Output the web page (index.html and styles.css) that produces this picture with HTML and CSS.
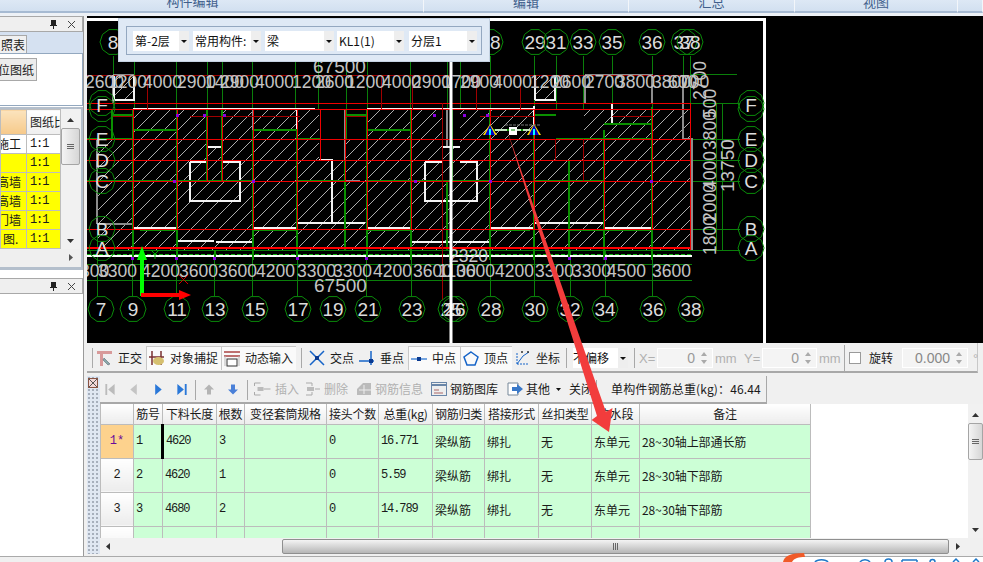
FILE: index.html
```html
<!DOCTYPE html>
<html lang="zh">
<head>
<meta charset="utf-8">
<title>钢筋编辑</title>
<link rel="stylesheet" href="styles.css">
</head>
<body>
<div class="app">
  <header class="ribbon">
    <div class="rtab rtab-a">构件编辑</div>
    <div class="rtab rtab-b">编辑</div>
    <div class="rtab rtab-c">汇总</div>
    <div class="rtab rtab-d">视图</div>
    <div class="rtab rtab-e"></div>
  </header>
  <div class="main">
    <aside class="side">
      <div class="pane-head">
        <svg class="pin" viewBox="0 0 9 11"><path d="M2 1h5v5h1v1H5v3H4V7H1V6h1z" fill="#222"/></svg>
        <svg class="close" viewBox="0 0 9 9"><path d="M1 1l7 7M8 1L1 8" stroke="#444" fill="none"/></svg>
      </div>
      <div class="tabstrip"><span class="tab">照表</span></div>
      <div class="box-top"><span class="btn-doc">位图纸</span></div>
      <div class="box-grid">
        <div class="gridwrap">
          <table class="sheet">
            <tr><th class="sh-o"></th><th class="sh-h">图纸比</th></tr>
            <tr><td class="c1 w">施工</td><td class="c2 w">1:1</td></tr>
            <tr><td class="c1 y"></td><td class="c2 y">1:1</td></tr>
            <tr><td class="c1 y">高墙</td><td class="c2 y">1:1</td></tr>
            <tr><td class="c1 y">高墙</td><td class="c2 y">1:1</td></tr>
            <tr><td class="c1 y">门墙</td><td class="c2 y">1:1</td></tr>
            <tr><td class="c1 c1b y">图.</td><td class="c2 y">1:1</td></tr>
          </table>
          <div class="vbar">
            <svg class="arw" viewBox="0 0 7 4"><path d="M0 4L3.500 0 7 4z" fill="#333"/></svg>
            <div class="vthumb"><i></i><i></i><i></i></div>
            <svg class="arw arw-end" viewBox="0 0 7 4"><path d="M0 0L3.500 4 7 0z" fill="#333"/></svg>
          </div>
        </div>
        <div class="side-hbar"><svg class="arw-r" viewBox="0 0 4 7"><path d="M0 0L4 3.500 0 7z" fill="#555"/></svg></div>
      </div>
      <div class="pane-head pane-head-2">
        <svg class="pin" viewBox="0 0 9 11"><path d="M2 1h5v5h1v1H5v3H4V7H1V6h1z" fill="#222"/></svg>
        <svg class="close" viewBox="0 0 9 9"><path d="M1 1l7 7M8 1L1 8" stroke="#444" fill="none"/></svg>
      </div>
      <div class="side-empty"></div>
    </aside>

    <section class="work">
      <div class="canvas">
        <svg class="cad" viewBox="87 16 896 327" preserveAspectRatio="none">
          <defs>
            <pattern id="hatch" patternUnits="userSpaceOnUse" width="14" height="14">
              <path d="M-2 16L16 -2M-2 2L2 -2M12 16L16 12" stroke="#d8d8d8" stroke-width=".8"/>
            </pattern>
            <polygon id="nd" points="13,0 10.500,7.600 4,12.400 -4,12.400 -10.500,7.600 -13,0 -10.500,-7.600 -4,-12.400 4,-12.400 10.500,-7.600" fill="none" stroke="#0a8a0a"/>
          </defs>
          <rect x="87" y="16" width="896" height="327" fill="#000"/>
          <path d="M87 19.500H764.500V343" fill="none" stroke="#fff" stroke-width="3"/>
          <!-- hatched floor -->
          <rect x="133" y="109" width="558" height="142" fill="url(#hatch)"/>
          <rect x="97" y="139" width="36" height="112" fill="url(#hatch)"/>
          <rect x="114" y="75" width="19" height="25" fill="url(#hatch)"/>
          <rect x="535" y="75" width="20" height="25" fill="url(#hatch)"/>
          <rect x="208" y="109" width="14" height="38" fill="#000"/>
          <rect x="319" y="109" width="26" height="52" fill="#000"/>
          <rect x="346" y="109" width="21" height="30" fill="#000"/>
          <rect x="112" y="109" width="21" height="30" fill="#000"/>
          <rect x="442" y="109" width="18" height="38" fill="#000"/>
          <rect x="535" y="109" width="21" height="30" fill="#000"/>
          <rect x="556" y="103" width="28" height="36" fill="#000"/>
          <!-- thin green axis lines -->
          <path class="gl" d="M113 56V100M134 62V109M176 62V109M207 62V109M222 62V109M252 62V109M295 62V109M318 62V109M346 62V109M367 62V109M410 62V109M447 62V109M460 62V109M490 56V109M534 56V109M556 56V109M583 56V109M612 56V109M652 56V109M683 56V109M690 56V109"/>
          <path class="gl" d="M97 223V296M132 250V296M176 250V296M214 250V296M252 250V296M297 250V296M366 250V296M411 250V296M490 250V296M534 250V296M570 250V296M605 250V296M652 250V296"/>
          <path class="gl" d="M87 264H692M87 280H692M87 139H740M87 160H740M87 181H740M87 229H740M87 250H740M610 103H740M690 74H737M716 103V250M722 103V250"/>
          <!-- gray walls -->
          <path class="gw" d="M113 75H134M113 75V103M585 75H652V103M585 75V103M683 75V139H692V250M133 109V205M253 109V162M345 110V160M447 110V147M120 181H133M297 181H313M345 181H360M570 181H604M97 224H132M97 139V224"/>
          <!-- white walls -->
          <path class="wt" d="M114 75V100H134V75M133 109H315M367 109H534M535 100H555V75M535 75V100"/>
          <path class="wt" d="M190 162H206M223 162H240V201H190V162M425 162H442M460 162H477V201H425V162M208 147H222M442 147H460"/>
          <path class="wt" d="M134 228H177V241H214M216 242H253V228H297M297 110V223H365M319 160H332V223M313 181H332M367 228H411V242H450M453 242H490V228H534M535 223H604V139H612M612 103V124H652M605 228H652V110M534 106V139M490 162V242"/>
          <path class="wh" d="M87 256H692"/>
          <!-- heavy green walls -->
          <path class="gh" d="M133 109V250M177 109V250M207 109V181M222 109V181M253 130V250M297 130V250M345 160V250M367 109V250M411 109V250M452 109V181M447 181V250M490 109V250M534 130V250M569 160V250M604 130V250M652 107V250M112 109V139M346 109V139"/>
          <path class="gh" d="M87 139H133M133 130H176M253 130H297M297 139H320M367 130H411M490 130H534M556 139H652M604 124H652M133 181H253M87 181H133M297 181H345M367 181H490M534 181H604M140 230H177M253 230H297M367 230H411M490 230H530M569 230H652M112 115H133M346 115H366M535 115H556"/>
          <path class="gd" d="M87 254H692"/>
          <path class="gh" d="M133 250V260M177 250V260M215 250V260M253 250V260M297 250V260M367 250V260M411 250V260M450 250V260M490 250V260M534 250V260M569 250V260M604 250V260M652 250V260"/>
          <!-- red grid -->
          <path class="rl" d="M87 103H690M87 109H690M87 139H690M87 160H690M87 181H690M87 229H690M133 109V229M177 109V229M207 116V181M222 116V181M253 109V229M297 109V229M320 109V160M345 109V181M367 109V229M411 109V229M490 109V229M534 109V229M604 139V229M652 109V229M690 103V250"/>
          <path class="rb" d="M87 248H690"/>
          <path class="dr" d="M87 75H690M147 75V109M381 75V109M412 75V109M476 75V109M520 75V109M442 103V300M112 116H133M346 116H366M190 116H300M480 116H534M612 116H652M555 139V160M583 139V181"/>
          <!-- marks -->
          <path class="mk" d="M176 115h3M203 115h3M223 115h3M252 181h3M433 115h3M463 115h3M486 115h3M173 181h3M414 181h3M489 181h3M650 181h3M131 258h3M175 258h3M213 258h3M296 258h3M365 258h3M450 258h3M568 258h3M604 258h3"/>
          <!-- dimensions -->
          <g class="dim">
            <text x="85" y="88">2600</text><text x="108" y="88">1200</text><text x="143" y="88">4000</text><text x="177" y="88">2900</text><text x="205" y="88">1400</text><text x="220" y="88">2900</text><text x="255" y="88">4000</text><text x="292" y="88">1200</text><text x="315" y="88">2600</text><text x="346" y="88">1200</text><text x="382" y="88">4000</text><text x="412" y="88">2900</text><text x="442" y="88">1700</text><text x="460" y="88">2900</text><text x="493" y="88">4000</text><text x="530" y="88">1200</text><text x="552" y="88">2600</text><text x="585" y="88">2700</text><text x="616" y="88">3800</text><text x="652" y="88">3800</text><text x="668" y="88">600</text><text x="680" y="88">700</text>
            <text x="80" y="277">300</text><text x="98" y="277">3300</text><text x="141" y="277">4200</text><text x="179" y="277">3600</text><text x="218" y="277">3600</text><text x="256" y="277">4200</text><text x="297" y="277">3300</text><text x="333" y="277">3300</text><text x="373" y="277">4200</text><text x="413" y="277">3600</text><text x="438" y="277">1100</text><text x="456" y="277">3600</text><text x="495" y="277">4200</text><text x="535" y="277">3300</text><text x="572" y="277">3300</text><text x="607" y="277">4500</text><text x="652" y="277">3600</text>
            <text class="big" x="313" y="73">67500</text><text class="big" x="314" y="292">67500</text><text x="449" y="262">2320</text>
            <text transform="translate(706 100) rotate(-90)">2700</text>
            <text transform="translate(716 118) rotate(-90)">500</text>
            <text transform="translate(716 150) rotate(-90)">3800</text>
            <text transform="translate(716 190) rotate(-90)">4000</text>
            <text transform="translate(716 222) rotate(-90)">2000</text>
            <text transform="translate(716 255) rotate(-90)">1800</text>
            <text class="big" transform="translate(734 192) rotate(-90)">13750</text>
          </g>
          <!-- axis nodes -->
          <g class="nodes">
            <use href="#nd" x="113" y="42"/><text x="113" y="49">8</text>
            <use href="#nd" x="490" y="42"/><text x="490" y="49">28</text>
            <use href="#nd" x="535" y="42"/><text x="535" y="49">29</text>
            <use href="#nd" x="556" y="42"/><text x="556" y="49">31</text>
            <use href="#nd" x="583" y="42"/><text x="583" y="49">33</text>
            <use href="#nd" x="612" y="42"/><text x="612" y="49">35</text>
            <use href="#nd" x="652" y="42"/><text x="652" y="49">36</text>
            <use href="#nd" x="684" y="42"/><text x="684" y="49">37</text>
            <use href="#nd" x="690" y="42"/><text x="690" y="49">38</text>
            <use href="#nd" x="101" y="309"/><text x="101" y="316">7</text>
            <use href="#nd" x="133" y="309"/><text x="133" y="316">9</text>
            <use href="#nd" x="177" y="309"/><text x="177" y="316">11</text>
            <use href="#nd" x="215" y="309"/><text x="215" y="316">13</text>
            <use href="#nd" x="255" y="309"/><text x="255" y="316">15</text>
            <use href="#nd" x="298" y="309"/><text x="298" y="316">17</text>
            <use href="#nd" x="333" y="309"/><text x="333" y="316">19</text>
            <use href="#nd" x="368" y="309"/><text x="368" y="316">21</text>
            <use href="#nd" x="412" y="309"/><text x="412" y="316">23</text>
            <use href="#nd" x="451" y="309"/><text x="451" y="316">25</text>
            <use href="#nd" x="455" y="309"/><text x="455" y="316">26</text>
            <use href="#nd" x="491" y="309"/><text x="491" y="316">28</text>
            <use href="#nd" x="535" y="309"/><text x="535" y="316">30</text>
            <use href="#nd" x="570" y="309"/><text x="570" y="316">32</text>
            <use href="#nd" x="605" y="309"/><text x="605" y="316">34</text>
            <use href="#nd" x="653" y="309"/><text x="653" y="316">36</text>
            <use href="#nd" x="691" y="309"/><text x="691" y="316">38</text>
            <use href="#nd" x="102" y="103"/><use href="#nd" x="102" y="109"/><text x="102" y="112">F</text>
            <use href="#nd" x="102" y="139"/><text x="102" y="146">E</text>
            <use href="#nd" x="102" y="160"/><text x="102" y="167">D</text>
            <use href="#nd" x="102" y="181"/><text x="102" y="188">C</text>
            <use href="#nd" x="102" y="229"/><text x="102" y="236">B</text>
            <use href="#nd" x="102" y="248"/><text x="102" y="255">A</text>
            <use href="#nd" x="751" y="103"/><use href="#nd" x="751" y="109"/><text x="751" y="112">F</text>
            <use href="#nd" x="751" y="139"/><text x="751" y="146">E</text>
            <use href="#nd" x="751" y="160"/><text x="751" y="167">D</text>
            <use href="#nd" x="751" y="181"/><text x="751" y="188">C</text>
            <use href="#nd" x="751" y="229"/><text x="751" y="236">B</text>
            <use href="#nd" x="751" y="248"/><text x="751" y="255">A</text>
          </g>
          <path d="M451 60V343" stroke="#fff" stroke-width="3"/>
          <!-- UCS arrows -->
          <path d="M142 296V258" stroke="#0f0" stroke-width="4"/>
          <path d="M142 246L147 260H137z" fill="#0f0"/>
          <path d="M141 295H180" stroke="#f00" stroke-width="4"/>
          <path d="M191 295L179 290V300z" fill="#f00"/>
          <path d="M151 250L155 254 159 250M155 254V259" stroke="#0a0" fill="none"/>
          <path d="M179 275L188 284M188 275L179 284" stroke="#c00" fill="none"/>
          <!-- selected beam -->
          <path d="M495 130H530" stroke="#fff" stroke-width="1.500" stroke-dasharray="12 2"/>
          <path d="M490 124L497 135H483z" fill="#ffdd00"/><path d="M490 125L495 135H485z" fill="#00c"/><path d="M489 129h2v6h-2z" fill="#0ff"/>
          <path d="M534 124L541 135H527z" fill="#ffdd00"/><path d="M534 125L539 135H529z" fill="#00c"/><path d="M533 129h2v6h-2z" fill="#0ff"/>
          <rect x="509" y="127" width="8" height="8" fill="#fff"/><path d="M511 130h4" stroke="#080"/>
          <path d="M505 125H540" stroke="#777" stroke-dasharray="3 1"/>
        </svg>
        <div class="floatbar">
          <div class="floatbox">
            <div class="pick pick-a"><span>第-2层</span><b></b></div>
            <div class="pick pick-b"><span>常用构件:</span><b></b></div>
            <div class="pick pick-c"><span>梁</span><b></b></div>
            <div class="pick pick-d"><span>KL1(1)</span><b></b></div>
            <div class="pick pick-e"><span>分层1</span><b></b></div>
          </div>
        </div>
      </div>

      <div class="snapbar">
        <i class="grip"></i>
        <div class="tool"><svg class="ic15" viewBox="0 0 16 16"><path d="M0 1h15v3H6v12H3V4H0z" fill="#d89a9a"/><path d="M7 8l6 6-2 1-5-5z" fill="#8aa" stroke="#556" stroke-width=".5"/></svg><span>正交</span></div>
        <div class="tool on"><svg class="ic15" viewBox="0 0 16 16"><path d="M3 0v14M12 0v14M0 6h15" stroke="#7a3030" stroke-width="1.500"/><ellipse cx="9.500" cy="10" rx="5.500" ry="4" fill="#d6c070"/></svg><span>对象捕捉</span></div>
        <div class="tool on"><svg class="ic15" viewBox="0 0 16 16"><path d="M0 1h16M0 5h16" stroke="#a44" stroke-width="1.500"/><path d="M1 5v10M15 5v10" stroke="#bbb"/><rect x="3" y="8" width="10" height="7" fill="#fff" stroke="#333"/></svg><span>动态输入</span></div>
        <i class="sep"></i>
        <div class="tool"><svg class="ic15" viewBox="0 0 16 16"><path d="M1 1l14 14M15 1L1 15" stroke="#1664c8" stroke-width="1.500"/><rect x="6" y="6" width="4" height="4" fill="#0a3a90"/></svg><span>交点</span></div>
        <div class="tool"><svg class="ic15" viewBox="0 0 16 16"><path d="M0 11h15" stroke="#1664c8" stroke-width="1.500"/><path d="M12 1v14" stroke="#1664c8" stroke-width="1.500"/><rect x="10" y="9" width="4" height="4" fill="#0a3a90"/></svg><span>垂点</span></div>
        <div class="tool on"><svg class="ic15" viewBox="0 0 16 16"><path d="M0 8h16" stroke="#4b8ad8" stroke-width="1.500"/><rect x="6" y="6" width="4" height="4" fill="#0a3a90"/></svg><span>中点</span></div>
        <div class="tool on"><svg class="ic15" viewBox="0 0 16 16"><path d="M8 1l7 5-3 8H4L1 6z" fill="none" stroke="#1664c8" stroke-width="1.500"/></svg><span>顶点</span></div>
        <div class="tool"><svg class="ic15" viewBox="0 0 16 16"><path d="M2 14V2M2 14h12" stroke="#1664c8" stroke-dasharray="2 1"/><path d="M2 14l6-8 6-4" stroke="#1664c8" fill="none"/><circle cx="13" cy="2" r="1" fill="#333"/><circle cx="7" cy="2" r="1" fill="#333"/></svg><span>坐标</span></div>
        <i class="sep"></i>
        <div class="pick pick-off"><span>不偏移</span><b></b></div>
        <i class="sep"></i>
        <span class="dis lbl-x">X=</span>
        <div class="spin"><span>0</span><u></u></div>
        <span class="dis">mm</span>
        <span class="dis">Y=</span>
        <div class="spin"><span>0</span><u></u></div>
        <span class="dis">mm</span>
        <i class="sep sep-thin"></i>
        <i class="chk"></i>
        <span class="rot">旋转</span>
        <div class="spin spin-r"><span>0.000</span><u></u></div>
        <span class="dis deg">°</span>
      </div>

      <div class="lower">
        <div class="strip">
          <svg class="strip-x" viewBox="0 0 10 10"><rect x=".5" y=".5" width="9" height="9" fill="#f2d8d8" stroke="#854"/><path d="M1 1l8 8M9 1L1 9" stroke="#555"/></svg>
        </div>
        <div class="rebar">
          <div class="rebarbar">
            <svg class="nav" viewBox="0 0 12 14"><path d="M1 1h2v12H1zM11 1v12L4 7z" fill="#bbb"/></svg>
            <svg class="nav" viewBox="0 0 12 14"><path d="M9 1v12L2 7z" fill="#c4c4c4"/></svg>
            <svg class="nav" viewBox="0 0 12 14"><path d="M3 1v12l7-6z" fill="#2a78d8"/></svg>
            <svg class="nav" viewBox="0 0 12 14"><path d="M1 1v12l7-6zM9 1h2v12H9z" fill="#2a78d8"/></svg>
            <i class="sep"></i>
            <svg class="nav" viewBox="0 0 12 12"><path d="M6 1l5 5H8v5H4V6H1z" fill="#b4b4b4"/></svg>
            <svg class="nav" viewBox="0 0 12 12"><path d="M6 11l5-5H8V1H4v5H1z" fill="#4a80d8"/></svg>
            <i class="sep"></i>
            <div class="tool dim-t"><svg class="ic15 wide" viewBox="0 0 18 14"><path d="M1 1h6M1 13h6M1 1v3M1 10v3M10 7h7" stroke="#aaa" fill="none"/><rect x="4" y="5" width="6" height="4" fill="#bbb"/></svg><span>插入</span></div>
            <div class="tool dim-t"><svg class="ic15" viewBox="0 0 16 14"><path d="M1 1h6v3M1 13h6v-3M10 7h5" stroke="#aaa" fill="none"/><rect x="2" y="5" width="7" height="4" fill="#bbb"/></svg><span>删除</span></div>
            <div class="tool dim-t"><svg class="ic15" viewBox="0 0 16 14"><path d="M1 7l6-6h8v12H1z" fill="#bbb"/><path d="M8 3v9M3 8h12" stroke="#eee"/></svg><span>钢筋信息</span></div>
            <div class="tool"><svg class="ic15" viewBox="0 0 16 14"><rect x=".5" y=".5" width="15" height="13" fill="#eee" stroke="#6a86a8"/><path d="M1 3h14" stroke="#6a86a8" stroke-width="2"/><path d="M3 8h5M3 11h9" stroke="#a66"/></svg><span>钢筋图库</span></div>
            <div class="tool"><svg class="ic15" viewBox="0 0 16 14"><path d="M1 1h10v12H1z" fill="#fff" stroke="#789"/><path d="M5 5h5V2l6 5-6 5V9H5z" fill="#3a78c8"/></svg><span>其他</span><svg class="caret" viewBox="0 0 5 3"><path d="M0 0h5L2.500 3z" fill="#111"/></svg></div>
            <div class="tool"><span>关闭</span></div>
            <i class="sep"></i>
            <span class="total">单构件钢筋总重(kg)：46.44</span>
          </div>
          <div class="tablewrap">
            <table class="rows">
              <colgroup><col class="k0"><col class="k1"><col class="k2"><col class="k3"><col class="k4"><col class="k5"><col class="k6"><col class="k7"><col class="k8"><col class="k9"><col class="k10"><col class="k11"></colgroup>
              <thead>
                <tr><th></th><th>筋号</th><th>下料长度</th><th>根数</th><th>变径套筒规格</th><th>接头个数</th><th>总重(kg)</th><th>钢筋归类</th><th>搭接形式</th><th>丝扣类型</th><th>流水段</th><th>备注</th></tr>
              </thead>
              <tbody>
                <tr class="cur"><th>1*</th><td>1</td><td class="bar">4620</td><td>3</td><td></td><td>0</td><td>16.771</td><td class="zh">梁纵筋</td><td class="zh">绑扎</td><td class="zh">无</td><td class="zh">东单元</td><td class="zh note">28~30轴上部通长筋</td></tr>
                <tr><th>2</th><td>2</td><td class="bar">4620</td><td>1</td><td></td><td>0</td><td>5.59</td><td class="zh">梁纵筋</td><td class="zh">绑扎</td><td class="zh">无</td><td class="zh">东单元</td><td class="zh note">28~30轴下部筋</td></tr>
                <tr><th>3</th><td>3</td><td class="bar">4680</td><td>2</td><td></td><td>0</td><td>14.789</td><td class="zh">梁纵筋</td><td class="zh">绑扎</td><td class="zh">无</td><td class="zh">东单元</td><td class="zh note">28~30轴下部筋</td></tr>
                <tr><th></th><td></td><td class="bar"></td><td></td><td></td><td></td><td></td><td class="zh">梁纵筋</td><td class="zh">绑扎</td><td class="zh">无</td><td class="zh">东单元</td><td class="zh note">28~30轴下部筋</td></tr>
              </tbody>
            </table>
            <div class="tbl-vbar">
              <svg class="arw" viewBox="0 0 7 4"><path d="M0 4L3.500 0 7 4z" fill="#333"/></svg>
              <div class="vthumb"><i></i><i></i><i></i></div>
              <svg class="arw arw-end" viewBox="0 0 7 4"><path d="M0 0L3.500 4 7 0z" fill="#333"/></svg>
            </div>
          </div>
          <div class="hbar">
            <svg class="arw-r" viewBox="0 0 4 7"><path d="M4 0L0 3.500 4 7z" fill="#333"/></svg>
            <div class="hthumb"><i></i><i></i><i></i></div>
            <svg class="arw-r" viewBox="0 0 4 7"><path d="M0 0L4 3.500 0 7z" fill="#333"/></svg>
          </div>
        </div>
      </div>
    </section>
  </div>
  <footer class="status"></footer>

  <svg class="overlay" viewBox="0 0 983 562">
    <polygon points="507,130 606,412 612.500,408 609,432 591.600,420 597,416" fill="#f23c3c"/>
    <path d="M783 562c1-6 8-9 21-9l1 4c-6 0-11 1-13 5z" fill="#f05a28"/>
    <path d="M815 562c2-3 11-3 13 0M860 562c2-3 8-3 10 0M885 562a3.500 3 0 0 1 7 0M902 560H917M902 560v2M917 560v2M930 562a2.500 2.500 0 0 1 5 0M953 562l3-3 3 3M973 562l3-3 3 3" fill="none" stroke="#1f78c8" stroke-width="1.500"/>
  </svg>
</div>
</body>
</html>
```
FILE: styles.css
```css
* { box-sizing: border-box; }
html, body { margin: 0; padding: 0; }
body { background: #f0f0f0; font: 12px/1.2 "Noto Sans CJK SC", "Liberation Sans", sans-serif; color: #1a1a1a; overflow: hidden; }
.app { position: relative; width: 983px; height: 562px; overflow: hidden; }
svg { display: block; }

/* ribbon */
.ribbon { display: grid; grid-template-columns: 424px 205px 166px 163px 25px; height: 16px; background: #edf1f6; }
.rtab { height: 13px; overflow: hidden; background: linear-gradient(#dde8f5, #d2e0f0); border-bottom: 2px solid #a6bad2; border-right: 1px solid #f3f6fa; text-align: center; color: #3f5f8c; font-size: 13px; line-height: 13px; }
.rtab-a { padding-right: 38px; line-height: 2px; }
.rtab-b, .rtab-c, .rtab-d { line-height: 4px; }

.main { display: flex; height: 540px; }

/* left pane */
.side { width: 84px; margin-right: 3px; flex: none; background: #fff; display: flex; flex-direction: column; border-right: 1px solid #9a9a9a; }
.pane-head { height: 16px; flex: none; display: flex; align-items: center; justify-content: flex-end; gap: 9px; padding-right: 6px; background: #efefef; border: 1px solid #a8a8a8; border-left: 0; }
.pin { width: 9px; height: 11px; }
.close { width: 9px; height: 9px; }
.tabstrip { height: 21px; flex: none; background: #d5e1f1; padding-top: 3px; display: flex; }
.tab { margin-left: -4px; width: 31px; padding: 0 0 0 4px; height: 18px; background: #f0f0f0; border: 1px solid #a8a8a8; border-bottom: 0; line-height: 17px; overflow: hidden; white-space: nowrap; font-size: 12px; }
.box-top { height: 53px; flex: none; background: #fff; border: 1px solid #93a8bf; border-left: 0; padding-top: 4px; }
.btn-doc { display: block; width: 37px; height: 23px; background: #ececec; border: 1px solid #a8a8a8; border-left: 0; text-indent: -2px; line-height: 21px; white-space: nowrap; overflow: hidden; }
.box-grid { flex: none; height: 163px; margin-top: 1px; background: #efefef; border: 2px solid #b4bfcc; border-left: 0; border-bottom-width: 3px; padding-right: 1px; display: flex; flex-direction: column; }
.gridwrap { display: flex; height: 140px; background: #fff; }
.sheet { border-collapse: collapse; table-layout: fixed; width: 61px; height: 140px; flex: none; }
.sheet th, .sheet td { border: 1px solid #bdbdbd; padding: 0; overflow: hidden; white-space: nowrap; font-weight: 400; }
.sh-o { width: 26px; height: 25px; background: linear-gradient(#fbe3bd, #f6c98a); }
.sh-h { background: linear-gradient(#fff, #eee); text-align: left; padding-left: 3px !important; }
.c1 { text-align: left; text-indent: -4px; }
.c1b { text-indent: 2px; }
.c2 { padding-left: 3px !important; font: 12px "Liberation Mono", monospace; letter-spacing: -1.100px; }
.w { background: #fff; }
.y { background: #ffff00; }
.vbar { flex: 1; display: flex; flex-direction: column; align-items: center; background: #f1f1f1; padding-top: 9px; }
.arw { width: 7px; height: 4px; flex: none; }
.arw-end { margin-top: auto; margin-bottom: 6px; }
.vthumb { align-self: stretch; margin-top: 6px; height: 37px; background: linear-gradient(90deg, #f4f4f4, #d6d6d6); border: 1px solid #a5a5a5; border-radius: 2px; display: flex; flex-direction: column; justify-content: center; gap: 1px; align-items: center; }
.vthumb i { width: 7px; height: 1px; background: #666; }
.side-hbar { height: 16px; display: flex; align-items: center; justify-content: flex-end; padding-right: 7px; }
.arw-r { width: 4px; height: 7px; flex: none; }
.pane-head-2 { margin-top: 8px; }
.side-empty { flex: 1; background: #fff; }

/* work area */
.work { flex: 1; min-width: 0; display: flex; flex-direction: column; }
.canvas { position: relative; height: 327px; background: #000; flex: none; }
.cad { width: 896px; height: 327px; }
.gl, .gh, .gd, .gw, .wt, .wh, .rl, .rb, .dr, .mk { fill: none; shape-rendering: crispEdges; }
.gl { stroke: #0a7f0a; stroke-width: 1; }
.gh { stroke: #0a9000; stroke-width: 2; }
.gd { stroke: #10b010; stroke-width: 1; stroke-dasharray: 4 2; }
.gw { stroke: #8c8c8c; stroke-width: 2; }
.wt { stroke: #f4f4f4; stroke-width: 2; }
.wh { stroke: #fff; stroke-width: 2; }
.rl { stroke: #f00000; stroke-width: 1; }
.rb { stroke: #ff0000; stroke-width: 2; }
.dr { stroke: #a00000; stroke-width: 1; }
.mk { stroke: #8a00e0; stroke-width: 3; }
.dim text { font: 17.500px "Liberation Sans", sans-serif; fill: #c4c4c4; }
.dim text.big { font-size: 19px; }
.nodes text { font: 19px "Liberation Sans", sans-serif; fill: #dcdcdc; text-anchor: middle; }

.floatbar { position: absolute; left: 31px; top: 2px; width: 372px; height: 44px; padding: 7px; background: #dfe9f5; border: 1px solid #c4d2e2; }
.floatbox { height: 29px; border: 1px solid #94a8c0; display: flex; gap: 3px; align-items: center; padding-left: 6px; }
.pick { display: flex; height: 20px; background: #fff; overflow: hidden; flex: none; }
.pick span { flex: 1; padding-left: 2px; line-height: 20px; white-space: nowrap; overflow: hidden; font-size: 12px; color: #111; }
.pick b { width: 10px; flex: none; background: #eee; position: relative; }
.pick b::after { content: ""; position: absolute; left: 2px; top: 9px; border: 3px solid transparent; border-top-color: #111; border-bottom: 0; }
.pick-a { width: 56px; }
.pick-b { width: 68px; margin-left: 1px; }
.pick-c { width: 69px; margin-left: 1px; }
.pick-d { width: 67px; }
.pick-e { width: 68px; margin-left: 2px; }

/* snap toolbar */
.snapbar { height: 30px; flex: none; width: 891px; display: grid; grid-template-columns: 2px 52px 75px 75px 10px 50px 52px 52px 52px 48px 12px 57px 10px 18px 56px 29px 20px 55px 27px 1px 17px 40px 66px 10px; align-items: center; padding: 2px 0 0 5px; background: #f0f0f0; border-bottom: 2px solid #a8a8a8; border-right: 1px solid #c8c8c8; }
.grip { height: 20px; width: 2px; border-left: 1px solid #aaa; }
.sep { width: 1px; height: 20px; background: #a8a8a8; justify-self: center; }
.sep-thin { height: 26px; }
.tool { display: flex; align-items: center; gap: 5px; height: 24px; white-space: nowrap; padding-left: 3px; }
.tool span { font-size: 12px; }
.tool.on { background-color: #fafafa; background-image: radial-gradient(#ececec .6px, transparent .7px); background-size: 2px 2px; border: 1px solid #c8c8c8; border-right: 0; border-bottom: 0; padding-left: 2px; }
.ic15 { width: 16px; height: 16px; flex: none; }
.wide { width: 19px; }
.pick-off { width: 55px; margin-left: 1px; }
.pick-off span { padding-left: 0; }
.dis { color: #b0b0b0; font: 13px "Liberation Sans", sans-serif; padding-left: 2px; }
.lbl-x { padding-left: 0; }
.spin { position: relative; height: 20px; background: #f4f4f4; border: 1px solid #fff; text-align: right; color: #9a9a9a; font: 14px/19px "Liberation Sans", sans-serif; padding-right: 17px; }
.spin u { position: absolute; right: 4px; top: 3px; width: 7px; height: 12px; }
.spin u::before, .spin u::after { content: ""; position: absolute; left: 0; border: 3.500px solid transparent; }
.spin u::before { top: 0; border-top: 0; border-bottom: 4px solid #aaa; }
.spin u::after { bottom: 0; border-bottom: 0; border-top: 4px solid #aaa; }
.spin-r { color: #888; }
.chk { width: 12px; height: 12px; background: #fff; border: 1px solid #9a9a9a; margin-left: 4px; }
.rot { padding-left: 7px; }
.deg { padding-left: 5px; }

/* rebar table */
.lower { display: flex; flex: 1; margin-top: 3px; min-height: 0; }
.strip { width: 13px; flex: none; height: 178px; padding: 2px 0 0 1px; background-color: #dfe7f2; background-image: radial-gradient(#a6afbc 1px, transparent 1.200px); background-size: 4px 4px; }
.strip-x { width: 10px; height: 10px; }
.rebar { flex: 1; min-width: 0; }
.rebarbar { width: 667px; height: 28px; display: grid; grid-template-columns: 20px 28px 20px 27px 1px 26px 22px 6px 52px 51px 75px 76px 62px 30px 1px auto; align-items: center; padding-top: 1px; background: #f0f0f0; border-bottom: 2px solid #a8a8a8; border-right: 1px solid #a8a8a8; }
.nav { width: 12px; height: 13px; justify-self: center; }
.rebarbar .tool { height: auto; gap: 3px; }
.rebarbar .ic15 { height: 14px; }
.dim-t { color: #b0b0b0; }
.caret { width: 5px; height: 3px; margin-left: 3px; flex: none; }
.total { white-space: nowrap; padding-left: 14px; font-size: 12px; letter-spacing: .15px; }
.tablewrap { height: 134px; display: flex; justify-content: space-between; overflow: hidden; background: #fff; }
.rows { border-collapse: collapse; table-layout: fixed; width: 710px; height: 155px; }
.k0 { width: 33px; } .k1 { width: 29px; } .k2 { width: 54px; } .k3 { width: 28px; } .k4 { width: 82px; } .k5 { width: 52px; } .k6 { width: 54px; } .k7 { width: 52px; } .k8 { width: 54px; } .k9 { width: 53px; } .k10 { width: 48px; } .k11 { width: 171px; }
.rows th, .rows td { border: 1px solid #bcbcbc; padding: 0 0 0 2px; overflow: hidden; white-space: nowrap; font-weight: 400; font-size: 12px; }
.rows thead th { height: 20px; text-align: center; padding: 0; background: linear-gradient(#fff, #ececec); letter-spacing: -.2px; border-top: 0; }
.rows tbody tr { height: 34px; }
.rows tbody th { text-align: center; padding: 0; background: linear-gradient(#fff, #ececec); font: 12px "Liberation Mono", monospace; }
.rows .cur th { background: #fdd28d; color: #6a0a9a; }
.rows td { background: #ccffd6; font: 12px "Liberation Mono", monospace; letter-spacing: -1.100px; }
.rows td.zh { font: 12px "Noto Sans CJK SC", sans-serif; letter-spacing: 0; }
.rows td.note { letter-spacing: -.1px; }
.rows td.bar { border-left: 1px solid #000; }
.rows .cur td.bar { border-left: 3px solid #000; }
.tbl-vbar { width: 15px; flex: none; display: flex; flex-direction: column; align-items: center; background: #f1f1f1; padding-top: 9px; }
.hbar { height: 16px; display: flex; align-items: center; padding-left: 6px; background: #f1f1f1; width: 870px; }
.hthumb { margin: 0 7px 0 172px; width: 667px; height: 15px; background: linear-gradient(#f4f4f4, #cfcfcf 60%, #b6b6b6); border: 1px solid #8f8f8f; border-radius: 2px; display: flex; justify-content: center; gap: 1px; align-items: center; }
.hthumb i { width: 1px; height: 7px; background: #666; }
.status { position: absolute; left: 0; right: 0; bottom: 0; height: 6px; background: linear-gradient(90deg, #f0f0f0 790px, #fff 790px); border-top: 1px solid #aaa; }
.overlay { position: absolute; left: 0; top: 0; width: 983px; height: 562px; pointer-events: none; }
```
